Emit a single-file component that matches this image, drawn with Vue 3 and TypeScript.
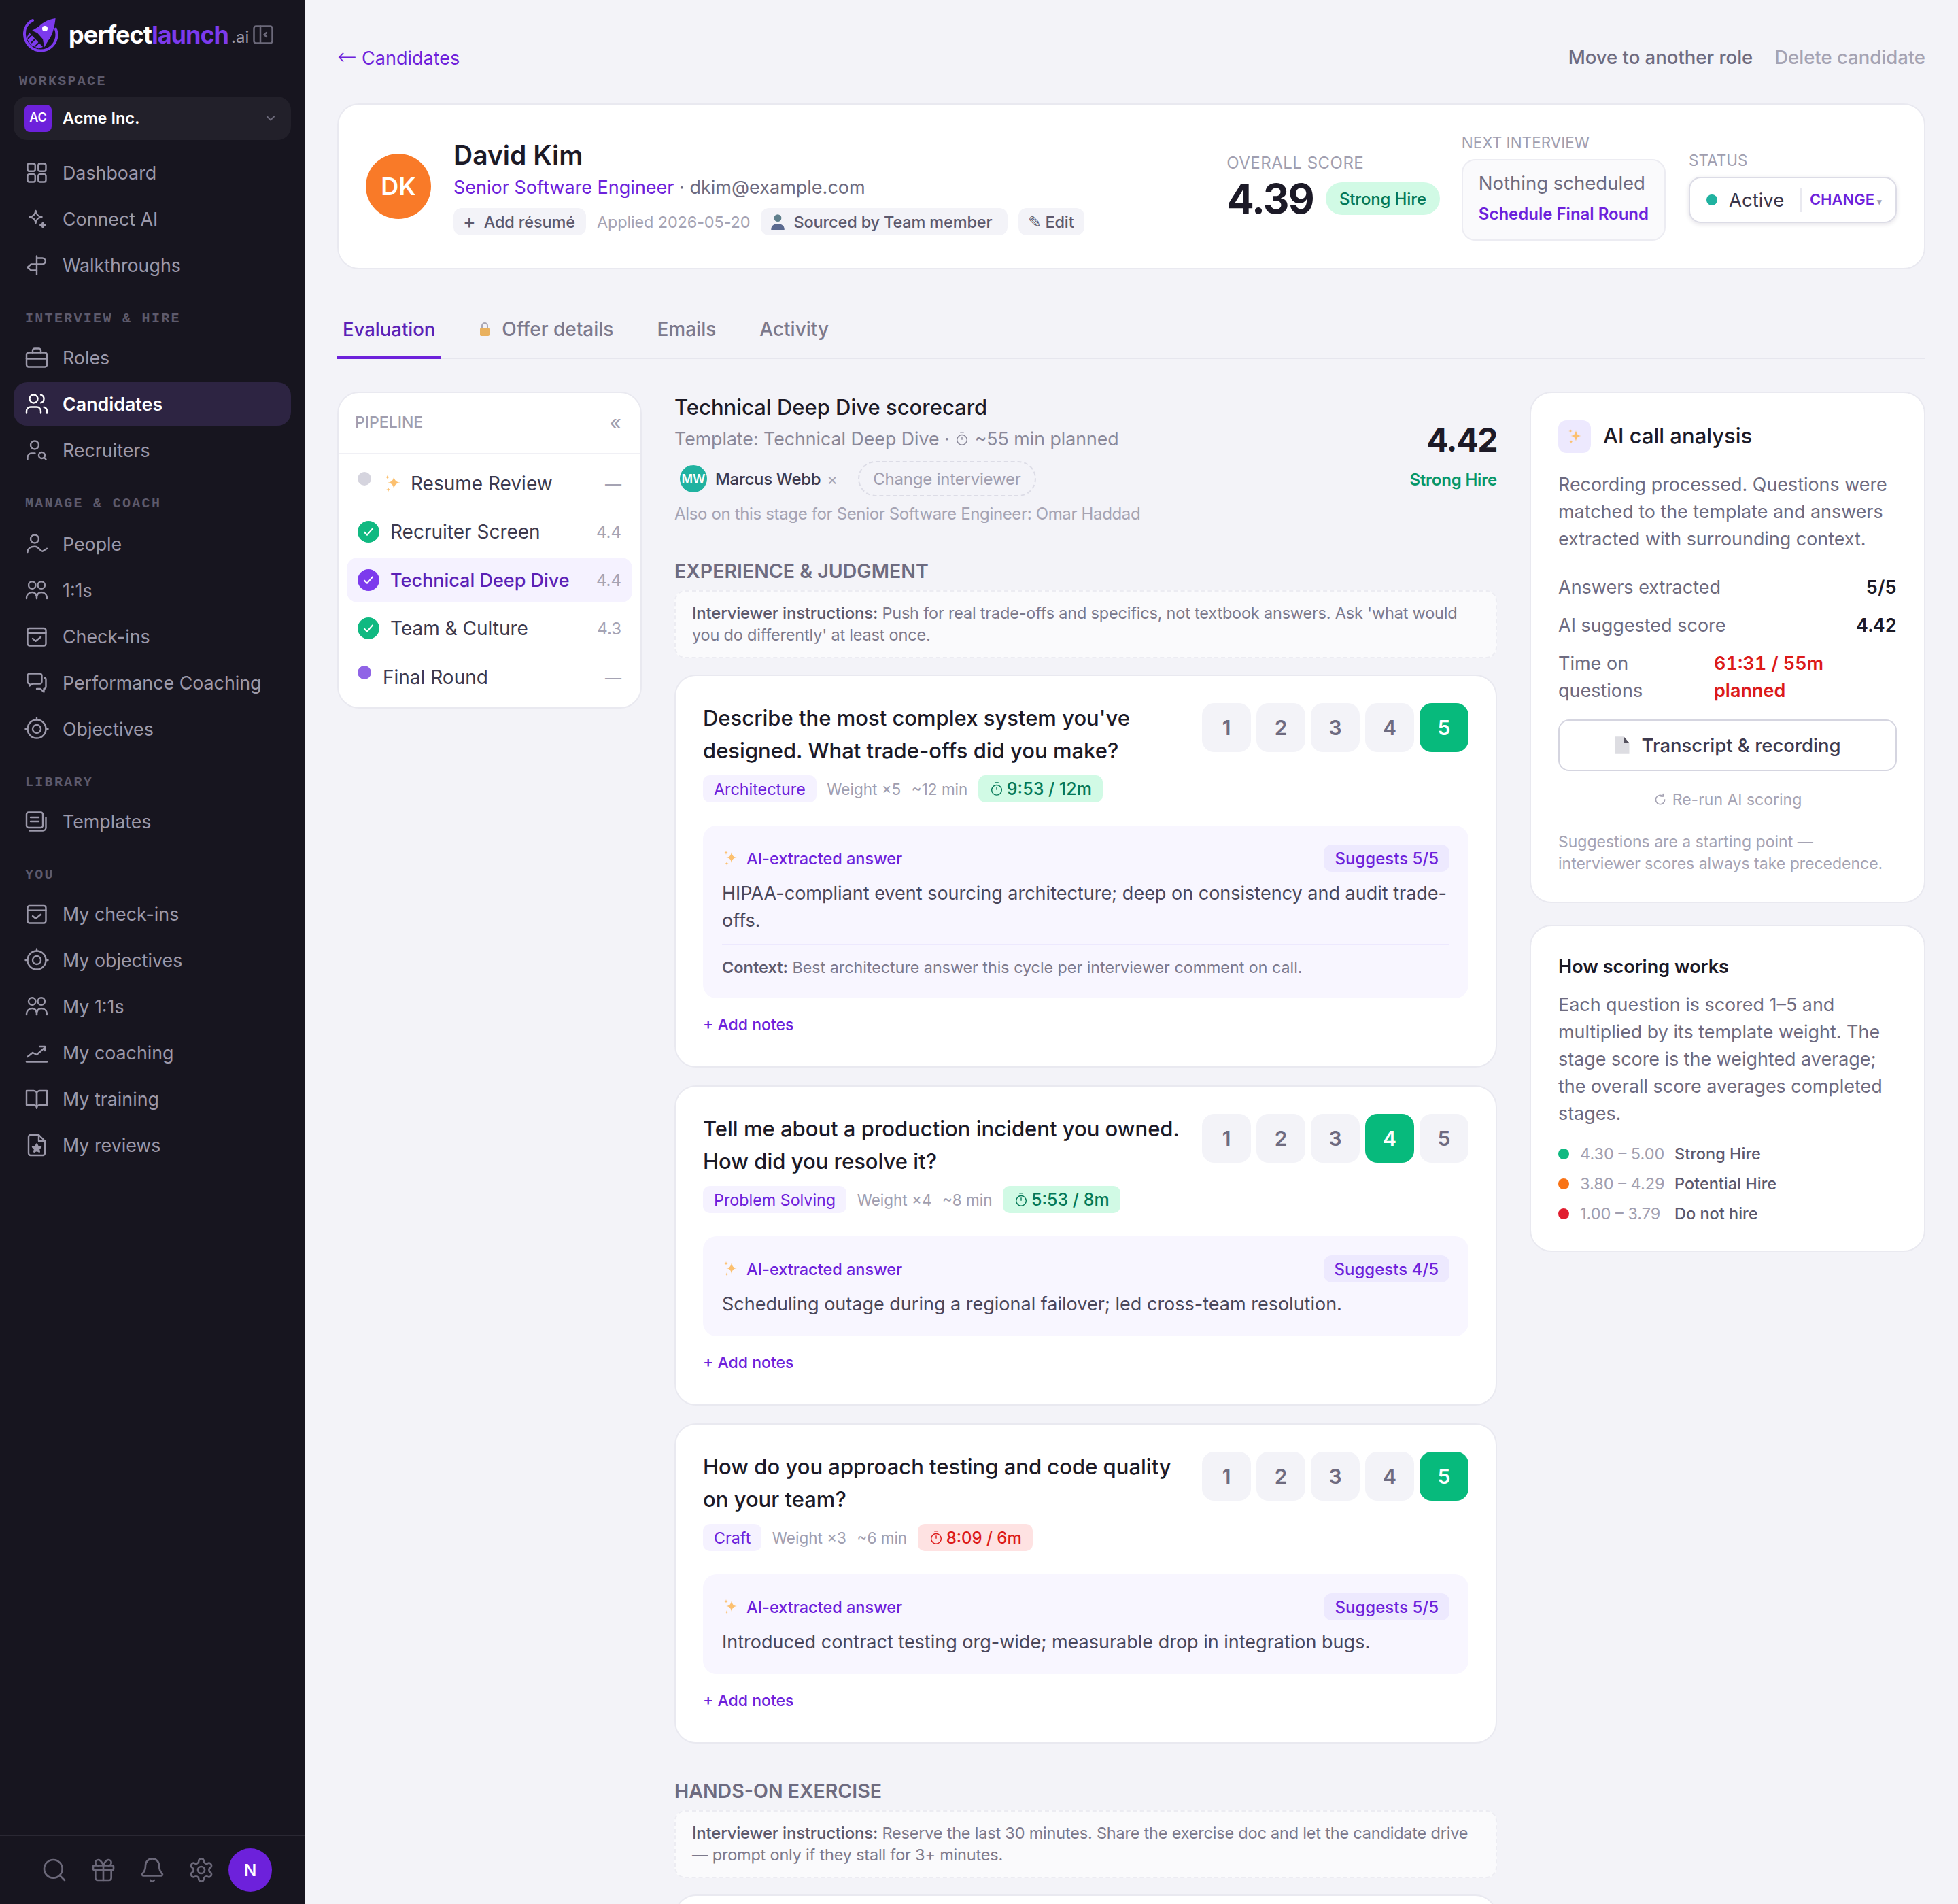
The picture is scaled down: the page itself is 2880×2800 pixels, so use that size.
<template>
  <div class="app">
    <aside class="sidebar">
      <div class="brand">
        <svg class="logo" viewBox="0 0 52 52" fill="none">
          <path d="M14 5C6 9 1.500 17 2 26c.6 13 11 23.500 24 23.500S49.500 39 49.500 26c0-3-.6-6-1.600-8.500" stroke="#7c3aed" stroke-width="4" stroke-linecap="round"/>
          <path d="M47.600 2C37 3.500 29 8 23 14l-10 6 8 3.500 8 9L31 44.500l6-10C43 28 46.500 14 47.600 2z" fill="#7c3aed"/>
          <circle cx="32" cy="17" r="4" fill="#fff"/>
          <path d="M9 23l20 21-6 2.500L11 41 5 31z" fill="#7c3aed"/>
          <path d="M7 32l7-7M12 38l7-7M18 43l6-6" stroke="#17151f" stroke-width="1.800"/>
        </svg>
        <span class="word">perfect<em>launch</em></span>
        <span class="tld">.ai</span>
        <svg class="collapse" viewBox="0 0 30 28" fill="none" stroke="#6b6879" stroke-width="2.500">
          <rect x="1.500" y="1.500" width="27" height="25" rx="3"/>
          <path d="M11 1.500v25M20 11l-3.500 3 3.500 3" stroke-linecap="round" stroke-linejoin="round"/>
        </svg>
      </div>

      <div class="workspace-label mono">WORKSPACE</div>
      <div class="workspace">
        <span class="ws-badge">AC</span>
        <span class="ws-name">Acme Inc.</span>
        <svg class="ws-chev" viewBox="0 0 24 24" fill="none" stroke="#6b6879" stroke-width="2.500" stroke-linecap="round" stroke-linejoin="round"><path d="M6 9l6 6 6-6"/></svg>
      </div>

      <nav class="nav">
        <template v-for="group in navGroups" :key="group.title">
          <div v-if="group.title" class="nav-title mono" :class="{ roomy: group.title === 'MANAGE & COACH' }">{{ group.title }}</div>
          <a v-for="item in group.items" :key="item.label" class="nav-item" :class="{ active: item.active }">
            <svg class="nav-icon" viewBox="0 0 24 24" fill="none" stroke="currentColor" stroke-width="1.600" stroke-linecap="round" stroke-linejoin="round" v-html="icons[item.icon]"></svg>
            <span>{{ item.label }}</span>
          </a>
        </template>
      </nav>

      <div class="side-foot">
        <button v-for="b in footIcons" :key="b" class="foot-btn">
          <svg viewBox="0 0 24 24" fill="none" stroke="currentColor" stroke-width="1.600" stroke-linecap="round" stroke-linejoin="round" v-html="icons[b]"></svg>
        </button>
        <span class="me">N</span>
      </div>
    </aside>

    <main class="main">
      <div class="topbar">
        <a class="back"><span class="arrow">←</span> Candidates</a>
        <div class="top-actions">
          <a class="move">Move to another role</a>
          <a class="delete">Delete candidate</a>
        </div>
      </div>

      <section class="hero card">
        <div class="avatar">DK</div>
        <div class="who">
          <h1>David Kim</h1>
          <div class="role"><span class="purple">Senior Software Engineer</span> · dkim@example.com</div>
          <div class="meta">
            <span class="chip"><span class="plus">+</span> Add résumé</span>
            <span class="applied">Applied 2026-05-20</span>
            <span class="chip">
              <svg class="bust" viewBox="0 0 20 24"><circle cx="10" cy="7" r="5" fill="#5f7f8c"/><path d="M1 23c0-6 4-8 9-8s9 2 9 8z" fill="#5b6a90"/></svg>
              Sourced by Team member
            </span>
            <span class="chip">✎ Edit</span>
          </div>
        </div>
        <div class="overall">
          <div class="cap">OVERALL SCORE</div>
          <div class="overall-row"><span class="big">4.39</span><span class="hire">Strong Hire</span></div>
        </div>
        <div class="next">
          <div class="cap">NEXT INTERVIEW</div>
          <div class="next-box">
            <div class="next-none">Nothing scheduled</div>
            <a class="next-link">Schedule Final Round</a>
          </div>
        </div>
        <div class="status">
          <div class="cap">STATUS</div>
          <div class="status-box">
            <i class="status-dot"></i>
            <span class="status-text">Active</span>
            <span class="status-change">CHANGE<small>▾</small></span>
          </div>
        </div>
      </section>

      <div class="tabs">
        <a v-for="t in tabs" :key="t.label" class="tab" :class="{ on: t.on }">
          <svg v-if="t.lock" class="lock" viewBox="0 0 16 24"><path d="M4 11V7a4 4 0 0 1 8 0v4" fill="none" stroke="#a9a7b5" stroke-width="2"/><rect x="1" y="10" width="14" height="12" rx="2" fill="#e9b15f"/></svg>
          {{ t.label }}
        </a>
      </div>

      <div class="columns">
        <aside class="pipeline card">
          <div class="pipe-head"><span>PIPELINE</span><b>«</b></div>
          <div class="pipe-list">
            <div v-for="s in stages" :key="s.name" class="stage" :class="{ current: s.current }">
              <span v-if="s.state === 'done'" class="tick" :class="{ violet: s.current }">
                <svg viewBox="0 0 24 24" fill="none" stroke="#fff" stroke-width="1.600" stroke-linecap="round" stroke-linejoin="round"><path d="M7.500 12.500l3 3 6-7"/></svg>
              </span>
              <i v-else class="pdot" :style="{ background: s.dot }"></i>
              <svg v-if="s.spark" class="spark pipe-spark" viewBox="0 0 24 24" v-html="sparkle"></svg>
              <span class="stage-name">{{ s.name }}</span>
              <span class="stage-score" :class="{ dash: s.score === '—' }">{{ s.score }}</span>
            </div>
          </div>
        </aside>

        <div class="center">
          <div class="score-head">
            <div class="sh-left">
              <h2>Technical Deep Dive scorecard</h2>
              <div class="template">Template: Technical Deep Dive · <svg class="watch" viewBox="0 0 24 24" fill="none" stroke="currentColor" stroke-width="1.500" v-html="icons.watch"></svg> ~55 min planned</div>
              <div class="interviewers">
                <span class="mw">MW</span>
                <span class="mw-name">Marcus Webb</span>
                <span class="mw-x">×</span>
                <span class="change-int">Change interviewer</span>
              </div>
              <div class="also">Also on this stage for Senior Software Engineer: Omar Haddad</div>
            </div>
            <div class="sh-right">
              <div class="sh-score">4.42</div>
              <div class="sh-label">Strong Hire</div>
            </div>
          </div>

          <template v-for="(sec, i) in sections" :key="sec.title">
            <h3 class="sec-title" :class="{ later: i > 0 }">{{ sec.title }}</h3>
            <div class="instructions"><b>Interviewer instructions:</b> {{ sec.note }}</div>
            <article v-for="q in sec.questions" :key="q.text" class="question card">
              <div class="q-top">
                <div class="q-text">{{ q.text }}</div>
                <div class="q-scores">
                  <span v-for="n in 5" :key="n" class="num" :class="{ sel: n === q.score }">{{ n }}</span>
                </div>
              </div>
              <div class="q-tags">
                <span class="q-cat">{{ q.cat }}</span>
                <span class="q-meta">Weight ×{{ q.weight }}</span>
                <span class="q-meta">~{{ q.mins }} min</span>
                <span class="q-time" :class="{ over: q.over }">
                  <svg class="watch" viewBox="0 0 24 24" fill="none" stroke="currentColor" stroke-width="1.500" v-html="icons.watch"></svg>{{ q.time }}
                </span>
              </div>
              <div class="answer" :class="{ plain: !q.context }">
                <div class="ans-head">
                  <svg class="spark" viewBox="0 0 24 24" v-html="sparkle"></svg>
                  <span class="ans-title">AI-extracted answer</span>
                  <span class="ans-sug">Suggests {{ q.score }}/5</span>
                </div>
                <p class="ans-text">{{ q.answer }}</p>
                <div v-if="q.context" class="ans-context"><b>Context:</b> {{ q.context }}</div>
              </div>
              <a class="notes">+ Add notes</a>
            </article>
          </template>
          <article class="question card stub"></article>
        </div>

        <aside class="rail">
          <section class="card panel">
            <div class="ai-head">
              <span class="ai-icon"><svg class="spark" viewBox="0 0 24 24" v-html="sparkle"></svg></span>
              <h4>AI call analysis</h4>
            </div>
            <p class="ai-copy">Recording processed. Questions were matched to the template and answers extracted with surrounding context.</p>
            <div class="stat"><span>Answers extracted</span><b>5/5</b></div>
            <div class="stat"><span>AI suggested score</span><b>4.42</b></div>
            <div class="stat wrap"><span>Time on questions</span><b>61:31 / 55m planned</b></div>
            <button class="transcript">
              <svg viewBox="0 0 20 24"><path d="M1 1h11l7 8v14H1z" fill="#dddde2"/><path d="M12 1l7 8h-7z" fill="#55525f"/></svg>
              Transcript &amp; recording
            </button>
            <div class="rerun">
              <svg viewBox="0 0 24 24" fill="none" stroke="currentColor" stroke-width="2" stroke-linecap="round" stroke-linejoin="round"><path d="M20 12a8 8 0 1 1-3-6.200"/><path d="M17 2v4h-4"/></svg>
              Re-run AI scoring
            </div>
            <p class="ai-note">Suggestions are a starting point — interviewer scores always take precedence.</p>
          </section>

          <section class="card panel how">
            <h5>How scoring works</h5>
            <p class="ai-copy">Each question is scored 1–5 and multiplied by its template weight. The stage score is the weighted average; the overall score averages completed stages.</p>
            <ul class="legend">
              <li v-for="l in legend" :key="l.label">
                <i :style="{ background: l.color }"></i>
                <span class="range">{{ l.range }}</span>
                <span class="lab">{{ l.label }}</span>
              </li>
            </ul>
          </section>
        </aside>
      </div>
    </main>
  </div>
</template>

<script setup lang="ts">
const sparkle =
  '<path d="M14 3c.8 5.200 2.800 7.200 8 8-5.200.8-7.200 2.800-8 8-.8-5.200-2.800-7.200-8-8 5.200-.8 7.200-2.800 8-8z" fill="#fcc06f"/><path d="M6 1c.3 2 1 2.700 3 3-2 .3-2.700 1-3 3-.3-2-1-2.700-3-3 2-.3 2.700-1 3-3zM7 17c.3 1.800.9 2.400 2.700 2.700-1.800.3-2.400.9-2.700 2.700-.3-1.800-.9-2.400-2.700-2.700 1.800-.3 2.400-.9 2.700-2.700z" fill="#fcc06f"/>'

const icons: Record<string, string> = {
  grid: '<rect x="3" y="3" width="7.500" height="7.500" rx="1.800"/><rect x="13.500" y="3" width="7.500" height="7.500" rx="1.800"/><rect x="3" y="13.500" width="7.500" height="7.500" rx="1.800"/><rect x="13.500" y="13.500" width="7.500" height="7.500" rx="1.800"/>',
  sparkles: '<path d="M11 4c.7 3.800 2.200 5.300 6 6-3.800.7-5.300 2.200-6 6-.7-3.800-2.200-5.300-6-6 3.800-.7 5.300-2.200 6-6z"/><path d="M18 15.500c.3 1.500.9 2.200 2.500 2.500-1.600.3-2.200 1-2.500 2.500-.3-1.500-.9-2.200-2.500-2.500 1.600-.3 2.200-1 2.500-2.500z" fill="currentColor"/>',
  signpost: '<path d="M12 3v18"/><path d="M12 5h5.500a3 3 0 0 1 3 3 3 3 0 0 1-3 3H12"/><path d="M12 11H6.500L3 14l3.500 3H12"/>',
  briefcase: '<rect x="2" y="7" width="20" height="14" rx="2"/><path d="M8 7V5a2 2 0 0 1 2-2h4a2 2 0 0 1 2 2v2"/><path d="M2 13h20"/>',
  users: '<path d="M16 21v-2a4 4 0 0 0-4-4H6a4 4 0 0 0-4 4v2"/><circle cx="9" cy="7" r="4"/><path d="M22 21v-2a4 4 0 0 0-3-3.870"/><path d="M16 3.130a4 4 0 0 1 0 7.750"/>',
  userSearch: '<circle cx="10" cy="7" r="4"/><path d="M10.300 15H7a4 4 0 0 0-4 4v2"/><circle cx="17" cy="17" r="3"/><path d="M21 21l-1.900-1.900"/>',
  people: '<circle cx="10" cy="7" r="4"/><path d="M3 20c0-3.500 3-5.500 7-5.500 2.500 0 3.500 1 5 3 1.500 1.500 2.500 2 3 1.500l4-2.500"/>',
  pair: '<circle cx="7.500" cy="7" r="3.500"/><circle cx="16.500" cy="7" r="3.500"/><path d="M2 20c0-4 2.500-6 5.500-6s4.500 2 4.500 6"/><path d="M12 20c0-4 1.500-6 4.500-6s5.500 2 5.500 6"/>',
  check: '<rect x="3" y="4" width="18" height="17" rx="2"/><path d="M3 8.500h18"/><path d="M8 14l3 2.500 5-4"/>',
  chats: '<path d="M3 5a2 2 0 0 1 2-2h10a2 2 0 0 1 2 2v6a2 2 0 0 1-2 2H8l-3 2v-2a2 2 0 0 1-2-2z"/><path d="M19.500 7a2 2 0 0 1 1.500 2v7a2 2 0 0 1-2 2v3l-3.500-3H12"/>',
  target: '<circle cx="12" cy="12" r="9"/><circle cx="12" cy="12" r="4"/><path d="M12 1v2M1 12h2M21 12h2"/>',
  docs: '<rect x="2" y="3" width="16" height="15" rx="2"/><path d="M6 8h8M6 12h8"/><path d="M5 21h13a3 3 0 0 0 3-3V8"/>',
  trend: '<path d="M2 21h20"/><path d="M3 16l5-4 4 2 8-7"/><path d="M15 6h5v4"/>',
  book: '<path d="M2 4h7a3 3 0 0 1 3 3v14a3 3 0 0 0-3-3H2z"/><path d="M22 4h-7a3 3 0 0 0-3 3v14a3 3 0 0 1 3-3h7z"/>',
  review: '<path d="M14 2H6a2 2 0 0 0-2 2v16a2 2 0 0 0 2 2h12a2 2 0 0 0 2-2V8z"/><path d="M14 2v6h6"/><path d="M12 11l1.200 2.500 2.800.3-2 1.900.5 2.800-2.500-1.400-2.500 1.400.5-2.800-2-1.900 2.800-.3z" fill="currentColor"/>',
  search: '<circle cx="11" cy="11" r="8"/><path d="M21 21l-4.300-4.300"/>',
  gift: '<rect x="3" y="8" width="18" height="4" rx="1"/><path d="M12 8v13"/><path d="M19 12v7a2 2 0 0 1-2 2H7a2 2 0 0 1-2-2v-7"/><path d="M7.500 8a2.500 2.500 0 0 1 0-5C10.300 3 12 8 12 8s1.700-5 4.500-5a2.500 2.500 0 0 1 0 5"/>',
  bell: '<path d="M10.300 21a1.900 1.900 0 0 0 3.400 0"/><path d="M3.300 15.300A1 1 0 0 0 4 17h16a1 1 0 0 0 .700-1.700C19.400 14 18 12.500 18 8A6 6 0 0 0 6 8c0 4.500-1.400 6-2.700 7.300"/>',
  gear: '<path d="M12.220 2h-.44a2 2 0 0 0-2 2v.18a2 2 0 0 1-1 1.730l-.43.250a2 2 0 0 1-2 0l-.15-.08a2 2 0 0 0-2.730.730l-.22.380a2 2 0 0 0 .730 2.730l.15.100a2 2 0 0 1 1 1.720v.510a2 2 0 0 1-1 1.740l-.15.090a2 2 0 0 0-.730 2.730l.22.380a2 2 0 0 0 2.730.730l.15-.08a2 2 0 0 1 2 0l.43.250a2 2 0 0 1 1 1.730V20a2 2 0 0 0 2 2h.44a2 2 0 0 0 2-2v-.18a2 2 0 0 1 1-1.730l.43-.250a2 2 0 0 1 2 0l.15.08a2 2 0 0 0 2.730-.730l.22-.390a2 2 0 0 0-.730-2.730l-.15-.08a2 2 0 0 1-1-1.740v-.5a2 2 0 0 1 1-1.740l.15-.09a2 2 0 0 0 .730-2.730l-.22-.380a2 2 0 0 0-2.730-.730l-.15.08a2 2 0 0 1-2 0l-.43-.250a2 2 0 0 1-1-1.730V4a2 2 0 0 0-2-2z"/><circle cx="12" cy="12" r="3"/>',
  watch: '<circle cx="12" cy="14" r="8"/><path d="M12 14V9M9 2h6"/>',
}

const footIcons = ['search', 'gift', 'bell', 'gear']

const navGroups = [
  {
    title: '',
    items: [
      { label: 'Dashboard', icon: 'grid' },
      { label: 'Connect AI', icon: 'sparkles' },
      { label: 'Walkthroughs', icon: 'signpost' },
    ],
  },
  {
    title: 'INTERVIEW & HIRE',
    items: [
      { label: 'Roles', icon: 'briefcase' },
      { label: 'Candidates', icon: 'users', active: true },
      { label: 'Recruiters', icon: 'userSearch' },
    ],
  },
  {
    title: 'MANAGE & COACH',
    items: [
      { label: 'People', icon: 'people' },
      { label: '1:1s', icon: 'pair' },
      { label: 'Check-ins', icon: 'check' },
      { label: 'Performance Coaching', icon: 'chats' },
      { label: 'Objectives', icon: 'target' },
    ],
  },
  { title: 'LIBRARY', items: [{ label: 'Templates', icon: 'docs' }] },
  {
    title: 'YOU',
    items: [
      { label: 'My check-ins', icon: 'check' },
      { label: 'My objectives', icon: 'target' },
      { label: 'My 1:1s', icon: 'pair' },
      { label: 'My coaching', icon: 'trend' },
      { label: 'My training', icon: 'book' },
      { label: 'My reviews', icon: 'review' },
    ],
  },
]

const tabs = [
  { label: 'Evaluation', on: true },
  { label: 'Offer details', lock: true },
  { label: 'Emails' },
  { label: 'Activity' },
]

const stages = [
  { name: 'Resume Review', state: 'todo', dot: '#d5d4de', spark: true, score: '—' },
  { name: 'Recruiter Screen', state: 'done', score: '4.4' },
  { name: 'Technical Deep Dive', state: 'done', current: true, score: '4.4' },
  { name: 'Team & Culture', state: 'done', score: '4.3' },
  { name: 'Final Round', state: 'todo', dot: '#9064e6', score: '—' },
]

const sections = [
  {
    title: 'EXPERIENCE & JUDGMENT',
    note: "Push for real trade-offs and specifics, not textbook answers. Ask 'what would you do differently' at least once.",
    questions: [
      {
        text: "Describe the most complex system you've designed. What trade-offs did you make?",
        score: 5,
        cat: 'Architecture',
        weight: 5,
        mins: 12,
        time: '9:53 / 12m',
        answer: 'HIPAA-compliant event sourcing architecture; deep on consistency and audit trade-offs.',
        context: 'Best architecture answer this cycle per interviewer comment on call.',
      },
      {
        text: 'Tell me about a production incident you owned. How did you resolve it?',
        score: 4,
        cat: 'Problem Solving',
        weight: 4,
        mins: 8,
        time: '5:53 / 8m',
        answer: 'Scheduling outage during a regional failover; led cross-team resolution.',
      },
      {
        text: 'How do you approach testing and code quality on your team?',
        score: 5,
        cat: 'Craft',
        weight: 3,
        mins: 6,
        time: '8:09 / 6m',
        over: true,
        answer: 'Introduced contract testing org-wide; measurable drop in integration bugs.',
      },
    ],
  },
  {
    title: 'HANDS-ON EXERCISE',
    note: 'Reserve the last 30 minutes. Share the exercise doc and let the candidate drive — prompt only if they stall for 3+ minutes.',
    questions: [],
  },
]

const legend = [
  { range: '4.30 – 5.00', label: 'Strong Hire', color: '#10b981' },
  { range: '3.80 – 4.29', label: 'Potential Hire', color: '#f97316' },
  { range: '1.00 – 3.79', label: 'Do not hire', color: '#e11d2e' },
]
</script>

<style>
html,
body {
  margin: 0;
  background: #f3f3f8;
}
</style>

<style scoped>
.app {
  display: flex;
  height: 2800px;
  overflow: hidden;
  font-family: Inter, "Liberation Sans", sans-serif;
  color: #1c1a27;
  background: #f3f3f8;
}
.mono {
  font-family: "Liberation Mono", "DejaVu Sans Mono", monospace;
  font-weight: 700;
  font-size: 20px;
  letter-spacing: 2.300px;
  line-height: 24px;
  color: #5d5a6c;
}
.sidebar {
  width: 448px;
  flex: none;
  height: 2800px;
  display: flex;
  flex-direction: column;
  background: #17151f;
  color: #9c99aa;
}
.brand {
  height: 102px;
  flex: none;
  display: flex;
  align-items: center;
  padding-left: 34px;
}
.logo {
  width: 52px;
  height: 52px;
  flex: none;
}
.word {
  margin-left: 15px;
  font-size: 36px;
  font-weight: 700;
  letter-spacing: -1px;
  color: #fff;
}
.word em {
  font-style: normal;
  color: #7c3aed;
}
.tld {
  margin: 6px 0 0 4px;
  font-size: 24px;
  color: #9c99aa;
}
.collapse {
  width: 30px;
  height: 28px;
  margin-left: 6px;
  flex: none;
}
.workspace-label {
  margin: 6px 0 10px 28px;
}
.workspace {
  margin: 0 20px;
  height: 64px;
  flex: none;
  display: flex;
  align-items: center;
  padding: 0 16px;
  background: #22202a;
  border-radius: 20px;
}
.ws-badge {
  width: 40px;
  height: 40px;
  box-sizing: border-box;
  padding-bottom: 3px;
  display: grid;
  place-items: center;
  background: #6d21db;
  border-radius: 8px;
  color: #fff;
  font-size: 18px;
  font-weight: 600;
}
.ws-name {
  margin-left: 16px;
  margin-top: -2px;
  font-size: 23.500px;
  font-weight: 600;
  color: #fff;
}
.ws-chev {
  margin-left: auto;
  margin-right: 4px;
  width: 20px;
  height: 20px;
}
.nav {
  margin-top: 16px;
  display: flex;
  flex-direction: column;
  gap: 4px;
  padding: 0 20px;
}
.nav-title {
  margin: 31px 0 9px 17px;
}
.nav-title.roomy {
  margin-bottom: 11px;
}
.nav-item {
  height: 64px;
  display: flex;
  align-items: center;
  gap: 20px;
  padding: 0 18px 0 16px;
  border-radius: 20px;
  font-size: 26.800px;
  color: #9c99aa;
}
.nav-item.active {
  background: #2d2442;
  color: #fff;
  font-weight: 600;
}
.nav-icon {
  width: 36px;
  height: 36px;
  flex: none;
}
.side-foot {
  margin-top: auto;
  border-top: 2px solid #2a2833;
  height: 100px;
  flex: none;
  display: flex;
  align-items: center;
  justify-content: center;
  gap: 8px;
}
.foot-btn {
  width: 64px;
  height: 64px;
  padding: 0;
  display: grid;
  place-items: center;
  background: none;
  border: 0;
  color: #6b6879;
}
.foot-btn svg {
  width: 40px;
  height: 40px;
}
.me {
  width: 64px;
  height: 64px;
  display: grid;
  place-items: center;
  border-radius: 50%;
  background: #6d21db;
  color: #fff;
  font-size: 24px;
  font-weight: 600;
}

.main {
  flex: 1;
  min-width: 0;
  padding: 64px 48px 0;
}
.topbar {
  height: 40px;
  display: flex;
  justify-content: space-between;
  align-items: center;
  font-size: 27.500px;
}
.back {
  font-size: 27px;
  color: #6d21db;
}
.arrow {
  font-family: "DejaVu Sans", "Liberation Sans", sans-serif;
  font-size: 34px;
  font-weight: 200;
  line-height: 1;
}
.top-actions {
  display: flex;
  gap: 32px;
}
.move {
  color: #6e6b80;
  font-weight: 500;
}
.delete {
  color: #a5a3b3;
  font-weight: 500;
}
.card {
  background: #fff;
  border: 2px solid #e9e9f0;
  border-radius: 32px;
  box-sizing: border-box;
}
.hero {
  margin-top: 48px;
  height: 244px;
  display: flex;
  align-items: center;
  padding: 0 40px;
}
.avatar {
  width: 96px;
  height: 96px;
  flex: none;
  display: grid;
  place-items: center;
  border-radius: 50%;
  background: #f97a28;
  color: #fff;
  font-size: 36px;
  font-weight: 600;
}
.who {
  margin-left: 33px;
  flex: 1;
}
.who h1 {
  margin: 0;
  padding-top: 2px;
  font-size: 39px;
  line-height: 48px;
  font-weight: 600;
}
.role {
  margin-top: 4px;
  font-size: 27px;
  line-height: 40px;
  color: #6e6b80;
}
.purple {
  color: #6d21db;
}
.meta {
  margin-top: 10px;
  display: flex;
  align-items: center;
  gap: 16px;
  font-size: 23.500px;
  letter-spacing: -0.150px;
}
.chip {
  height: 40px;
  display: flex;
  align-items: center;
  gap: 6px;
  padding: 0 16px 0 14px;
  border-radius: 12px;
  background: #f3f3f8;
  color: #5c596d;
  font-weight: 500;
  white-space: pre;
}
.plus {
  font-size: 28px;
  line-height: 1;
}
.bust {
  width: 22px;
  height: 26px;
}
.applied {
  color: #a5a3b3;
}
.cap {
  font-size: 24px;
  line-height: 32px;
  color: #a09eaf;
  letter-spacing: 0.500px;
}
.next .cap,
.status .cap {
  font-size: 22.500px;
  letter-spacing: 0;
}
.overall-row {
  margin-top: 4px;
  display: flex;
  align-items: center;
  gap: 18px;
}
.big {
  font-size: 60px;
  line-height: 64px;
  font-weight: 700;
  letter-spacing: -1.800px;
}
.hire {
  height: 48px;
  display: flex;
  align-items: center;
  padding: 0 20px;
  border-radius: 24px;
  background: #d1fae5;
  color: #047857;
  font-size: 24px;
  letter-spacing: -0.150px;
  font-weight: 500;
}
.next {
  margin-left: 32px;
}
.next-box {
  margin-top: 8px;
  padding: 0 23px 6px;
  height: 120px;
  box-sizing: border-box;
  display: flex;
  flex-direction: column;
  justify-content: center;
  gap: 12px;
  border: 2px solid #ececf2;
  border-radius: 20px;
  background: #fafafc;
}
.next-none {
  font-size: 27.500px;
  line-height: 36px;
  color: #6e6b80;
}
.next-link {
  font-size: 24px;
  line-height: 32px;
  font-weight: 600;
  color: #6d21db;
}
.status {
  margin-left: 34px;
}
.status-box {
  margin-top: 8px;
  height: 68px;
  width: 306px;
  box-sizing: border-box;
  display: flex;
  align-items: center;
  padding: 0 20px 0 24px;
  border: 2px solid #dcdce6;
  border-radius: 18px;
  box-shadow: 0 2px 6px rgba(30, 20, 60, 0.12);
}
.status-dot {
  width: 16px;
  height: 16px;
  border-radius: 50%;
  background: #20b2a0;
}
.status-text {
  margin-left: 17px;
  font-size: 27.500px;
  font-weight: 400;
  color: #38354a;
}
.status-change {
  margin-left: auto;
  padding-left: 12px;
  border-left: 2px solid #e9e9f0;
  line-height: 32px;
  font-size: 22px;
  font-weight: 600;
  color: #6d21db;
}
.status-change small {
  margin-left: 4px;
  font-size: 13px;
  color: #a09eaf;
}

.tabs {
  margin-top: 52px;
  height: 80px;
  box-sizing: border-box;
  display: flex;
  gap: 48px;
  border-bottom: 2px solid #e6e6ee;
}
.tab {
  height: 80px;
  box-sizing: border-box;
  display: flex;
  align-items: center;
  gap: 16px;
  padding: 0 8px 8px;
  font-size: 28px;
  font-weight: 500;
  color: #7c798c;
}
.tab.on {
  color: #5b21b6;
  font-size: 27.500px;
  border-bottom: 4px solid #6d21db;
  padding-bottom: 4px;
}
.lock {
  width: 18px;
  height: 24px;
}

.columns {
  margin-top: 48px;
  display: grid;
  grid-template-columns: 448px minmax(0, 1fr) 582px;
  gap: 48px;
  align-items: start;
}
.pipe-head {
  height: 90px;
  box-sizing: border-box;
  display: flex;
  align-items: center;
  justify-content: space-between;
  padding: 0 28px 2px 24px;
  border-bottom: 2px solid #f0f0f5;
  font-size: 23px;
  font-weight: 500;
  color: #a09eaf;
}
.pipe-head b {
  font-size: 30px;
  font-weight: 400;
}
.pipe-list {
  padding: 10px 12px 10px;
  display: flex;
  flex-direction: column;
  gap: 5px;
}
.stage {
  min-height: 66px;
  display: flex;
  align-items: center;
  padding: 0 16px;
  border-radius: 16px;
  font-size: 28px;
  color: #3d3a4e;
}
.stage:last-child {
  min-height: 68px;
}
.stage.current {
  background: #f5f2ff;
  color: #5b21b6;
  font-size: 27px;
  font-weight: 500;
}
.tick {
  width: 32px;
  height: 32px;
  flex: none;
  border-radius: 50%;
  margin-right: 16px;
  background: #10b981;
}
.tick.violet {
  background: #7c3aed;
}
.tick svg {
  display: block;
}
.pdot {
  width: 20px;
  height: 20px;
  flex: none;
  border-radius: 50%;
  margin: -14px 17px 0 0;
}
.spark {
  width: 24px;
  height: 24px;
  flex: none;
}
.pipe-spark {
  width: 28px;
  height: 28px;
  margin-right: 13px;
}
.stage-score {
  margin-left: auto;
  font-size: 24px;
  font-weight: 400;
  color: #a5a3b3;
}

.score-head {
  display: flex;
  justify-content: space-between;
  align-items: center;
}
.score-head h2 {
  margin: 0;
  font-size: 31px;
  line-height: 46px;
  font-weight: 500;
}
.template {
  margin-top: 3px;
  font-size: 26.700px;
  line-height: 40px;
  color: #8a8899;
  display: flex;
  align-items: center;
  white-space: pre;
}
.watch {
  width: 22px;
  height: 22px;
  flex: none;
}
.interviewers {
  margin-top: 13px;
  height: 52px;
  display: flex;
  align-items: center;
  padding-left: 8px;
}
.mw {
  width: 40px;
  height: 40px;
  display: grid;
  place-items: center;
  border-radius: 50%;
  background: #20b2a0;
  color: #fff;
  font-size: 18px;
  font-weight: 600;
}
.mw-name {
  margin-left: 12px;
  font-size: 24px;
  letter-spacing: -0.300px;
  font-weight: 500;
  color: #3d3a4e;
}
.mw-x {
  margin-left: 9px;
  font-size: 24px;
  color: #a5a3b3;
}
.change-int {
  margin-left: 30px;
  height: 52px;
  box-sizing: border-box;
  display: flex;
  align-items: center;
  padding: 0 20px;
  border: 2px dashed #dcdce6;
  border-radius: 26px;
  font-size: 24px;
  letter-spacing: -0.200px;
  color: #a09eaf;
}
.also {
  margin-top: 8px;
  font-size: 24px;
  letter-spacing: -0.350px;
  line-height: 36px;
  color: #a5a3b3;
}
.sh-right {
  margin-top: -10px;
}
.sh-score {
  text-align: right;
  font-size: 48px;
  line-height: 60px;
  letter-spacing: -1.440px;
  font-weight: 700;
}
.sh-label {
  margin-top: 11px;
  text-align: right;
  font-size: 24px;
  letter-spacing: -0.200px;
  line-height: 36px;
  font-weight: 600;
  color: #059669;
}
.sec-title {
  margin: 46px 0 8px;
  font-size: 28.500px;
  line-height: 40px;
  font-weight: 600;
  color: #6e6b80;
}
.sec-title.later {
  margin: 50px 0 8px;
}
.instructions {
  box-sizing: border-box;
  padding: 16px 24px;
  border: 2px dashed #ececf2;
  border-radius: 16px;
  background: #fafafc;
  font-size: 23.500px;
  letter-spacing: -0.200px;
  line-height: 32px;
  color: #7c798c;
}
.instructions b {
  font-size: 24px;
  font-weight: 500;
  color: #5c596d;
}
.question {
  margin-top: 26px;
  padding: 40px 40px 42px;
}
.instructions + .question {
  margin-top: 24px;
}
.stub {
  height: 200px;
}
.q-top {
  display: flex;
  justify-content: space-between;
  gap: 16px;
}
.q-text {
  margin-top: -2px;
  font-size: 31px;
  line-height: 48px;
  font-weight: 500;
}
.q-scores {
  display: flex;
  gap: 8px;
  flex: none;
}
.num {
  width: 72px;
  height: 72px;
  display: grid;
  place-items: center;
  border-radius: 18px;
  background: #f3f3f8;
  color: #6e6b80;
  font-size: 30px;
  font-weight: 600;
}
.num.sel {
  background: #07ba7c;
  color: #fff;
}
.q-tags {
  margin-top: 12px;
  display: flex;
  align-items: center;
  gap: 15.500px;
  font-size: 23.300px;
}
.q-cat {
  height: 40px;
  display: flex;
  align-items: center;
  padding: 0 16px;
  border-radius: 10px;
  background: #f5f2ff;
  color: #6d21db;
}
.q-meta {
  font-size: 22.500px;
  color: #a09eaf;
}
.q-time {
  height: 40px;
  display: flex;
  align-items: center;
  gap: 4px;
  padding: 0 16px;
  border-radius: 10px;
  background: #d1fae5;
  color: #047857;
  font-size: 25px;
  font-weight: 500;
}
.q-time.over {
  background: #fee2e2;
  color: #dc1a1a;
  font-size: 24px;
}
.answer {
  margin-top: 34px;
  padding: 28px 28px 24px;
  border-radius: 20px;
  background: #f8f6ff;
}
.answer.plain {
  padding-bottom: 27px;
}
.ans-head {
  display: flex;
  align-items: center;
  gap: 12px;
}
.ans-title {
  font-size: 23.500px;
  font-weight: 500;
  color: #6d21db;
}
.ans-sug {
  margin-left: auto;
  height: 40px;
  display: flex;
  align-items: center;
  padding: 0 16px;
  border-radius: 12px;
  background: #ede9fe;
  color: #6d21db;
  font-size: 24px;
  font-weight: 500;
}
.ans-text {
  margin: 12px 0 0;
  font-size: 27px;
  line-height: 40px;
  color: #4a475b;
}
.ans-context {
  margin-top: 14px;
  padding: 17px 0 5px;
  border-top: 2px solid #ede9fe;
  font-size: 23.250px;
  line-height: 32px;
  color: #7c798c;
}
.ans-context b {
  font-size: 23.500px;
  font-weight: 600;
  color: #5c596d;
}
.notes {
  display: block;
  margin-top: 20px;
  font-size: 23px;
  line-height: 38px;
  font-weight: 500;
  color: #6d21db;
}

.rail {
  display: flex;
  flex-direction: column;
  gap: 32px;
}
.panel {
  padding: 40px;
}
.ai-head {
  display: flex;
  align-items: center;
  gap: 18px;
}
.ai-icon {
  width: 48px;
  height: 48px;
  display: grid;
  place-items: center;
  border-radius: 12px;
  background: #ede9fe;
}
.ai-head h4 {
  margin: -4px 0 0;
  font-size: 31px;
  font-weight: 500;
}
.ai-copy {
  margin: 26px 0 0;
  font-size: 26.900px;
  line-height: 40px;
  color: #6e6b80;
}
.stat {
  margin-top: 16px;
  display: flex;
  justify-content: space-between;
  font-size: 27px;
  line-height: 40px;
  color: #6e6b80;
}
.ai-copy + .stat {
  margin-top: 32px;
}
.stat b {
  font-weight: 600;
  font-variant-numeric: tabular-nums;
  color: #1c1a27;
}
.stat.wrap span {
  flex: 0 0 229px;
}
.stat.wrap b {
  color: #dc1a1a;
}
.transcript {
  margin-top: 22px;
  width: 100%;
  height: 76px;
  display: flex;
  align-items: center;
  justify-content: center;
  gap: 16px;
  background: #fff;
  border: 2px solid #d5d5e0;
  border-radius: 16px;
  font: 500 27.500px Inter, sans-serif;
  color: #3d3a4e;
}
.transcript svg {
  width: 24px;
  height: 28px;
}
.rerun {
  margin-top: 24px;
  display: flex;
  align-items: center;
  justify-content: center;
  gap: 8px;
  font-size: 23px;
  line-height: 36px;
  color: #a5a3b3;
}
.rerun svg {
  width: 20px;
  height: 20px;
}
.ai-note {
  margin: 28px 0 0;
  font-size: 23px;
  line-height: 32px;
  color: #a5a3b3;
}
.how h5 {
  margin: 0;
  font-size: 27px;
  line-height: 40px;
  font-weight: 600;
}
.how .ai-copy {
  margin-top: 15px;
}
.legend {
  list-style: none;
  margin: 26px 0 0;
  padding: 0;
  display: flex;
  flex-direction: column;
  gap: 16px;
}
.legend li {
  display: flex;
  align-items: center;
  font-size: 23.500px;
  line-height: 28px;
}
.legend i {
  width: 16px;
  height: 16px;
  flex: none;
  border-radius: 50%;
  margin-right: 16px;
}
.range {
  width: 139px;
  color: #a09eaf;
}
.lab {
  color: #5c596d;
  font-weight: 500;
}
</style>
